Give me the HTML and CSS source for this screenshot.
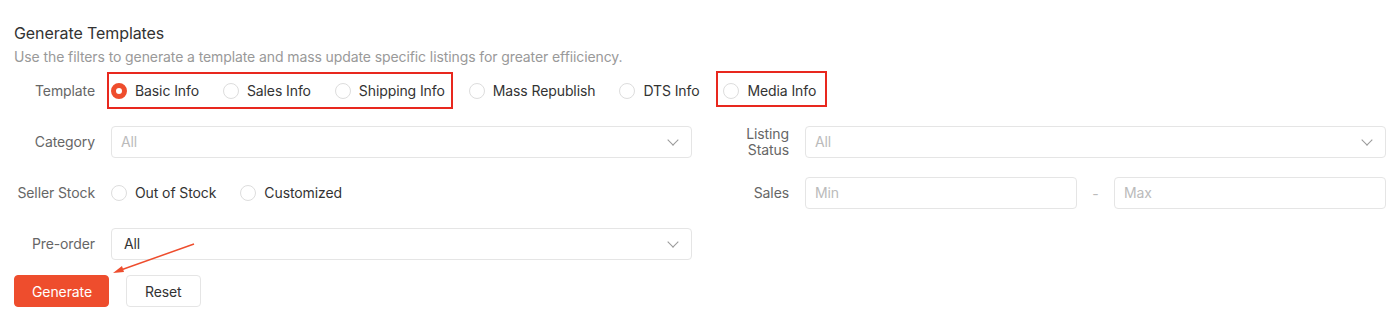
FILE: index.html
```html
<!DOCTYPE html>
<html lang="en">
<head>
    <meta charset="UTF-8">
    <meta name="viewport" content="width=device-width, initial-scale=1.0">
    <title>Generate Templates</title>
    <link rel="stylesheet" href="styles.css">
</head>
<body>
    <div class="page">
        <div class="title">Generate Templates</div>
        <div class="subtitle">Use the filters to generate a template and mass update specific listings for greater effiiciency.</div>

        <div class="form">
            <!-- Template -->
            <div class="field field-wide">
                <div class="label">Template</div>
                <div class="radios">
                    <span class="group group-main">
                        <label class="radio"><span class="dot checked"></span>Basic Info</label>
                        <label class="radio"><span class="dot"></span>Sales Info</label>
                        <label class="radio"><span class="dot"></span>Shipping Info</label>
                    </span>
                    <label class="radio"><span class="dot"></span>Mass Republish</label>
                    <label class="radio"><span class="dot"></span>DTS Info</label>
                    <span class="group group-media">
                        <label class="radio"><span class="dot"></span>Media Info</label>
                    </span>
                </div>
            </div>

            <div class="field">
                <div class="label">Category</div>
                <div class="select placeholder">All<span class="chevron"></span></div>
            </div>
            <div class="field">
                <div class="label">Listing Status</div>
                <div class="select placeholder">All<span class="chevron"></span></div>
            </div>

            <div class="field">
                <div class="label">Seller Stock</div>
                <div class="radios">
                    <label class="radio"><span class="dot"></span>Out of Stock</label>
                    <label class="radio"><span class="dot"></span>Customized</label>
                </div>
            </div>
            <div class="field">
                <div class="label">Sales</div>
                <div class="range">
                    <div class="input placeholder">Min</div>
                    <span class="dash">-</span>
                    <div class="input placeholder">Max</div>
                </div>
            </div>

            <div class="field">
                <div class="label">Pre-order</div>
                <div class="select">All<span class="chevron"></span></div>
            </div>
        </div>

        <div class="actions">
            <button class="btn btn-primary">Generate</button>
            <button class="btn">Reset</button>
        </div>

        <!-- annotation arrow -->
        <svg class="arrow" width="110" height="45" viewBox="0 0 110 45">
            <line x1="94" y1="9" x2="18" y2="36" stroke="#ee4d2d" stroke-width="1.5"/>
            <polygon points="13,38 22,31 24,37" fill="#ee4d2d"/>
        </svg>
    </div>
</body>
</html>
```

FILE: styles.css
```css
body {
    margin: 0;
    background: #fff;
    font-family: "Inter", "Liberation Sans", sans-serif;
    font-size: 14px;
    letter-spacing: -0.1px;
    color: #333;
}
.page {
    position: relative;
    padding: 22px 14px 0;
}
.title {
    font-size: 16px;
    line-height: 22px;
    color: #333;
}
.subtitle {
    margin-top: 3px;
    line-height: 20px;
    color: #999;
}
.form {
    display: grid;
    grid-template-columns: 1fr 1fr;
    column-gap: 16px;
    row-gap: 19px;
    margin-top: 8px;
}
.field {
    display: flex;
    align-items: center;
    min-height: 32px;
}
.field-wide {
    grid-column: 1 / 3;
}
.label {
    width: 81px;
    flex-shrink: 0;
    margin-right: 16px;
    text-align: right;
    line-height: 16px;
    color: #666;
}
.radios {
    display: flex;
    align-items: center;
}
.group {
    position: relative;
    display: flex;
    align-items: center;
}
/* red annotation boxes */
.group::after {
    content: "";
    position: absolute;
    border: 2px solid #e8281e;
}
.group-main::after {
    left: -4px;
    right: 16px;
    top: -9px;
    bottom: -8px;
}
.group-media::after {
    left: -7px;
    right: 13px;
    top: -10px;
    bottom: -6px;
}
.radio {
    display: flex;
    align-items: center;
    margin-right: 24px;
    line-height: 20px;
    color: #333;
}
.dot {
    box-sizing: border-box;
    width: 16px;
    height: 16px;
    margin-right: 8px;
    border: 1px solid #ddd;
    border-radius: 50%;
    background: #fff;
}
.dot.checked {
    border: 5px solid #ee4d2d;
    background: #fff;
}
.select,
.input {
    box-sizing: border-box;
    position: relative;
    flex: 1;
    height: 32px;
    line-height: 30px;
    padding: 0 12px;
    border: 1px solid #e5e5e5;
    border-radius: 4px;
    color: #333;
}
.placeholder {
    padding-left: 9px;
    color: #bbb;
}
.chevron {
    position: absolute;
    right: 14px;
    top: 9px;
    width: 7px;
    height: 7px;
    border-right: 1px solid #999;
    border-bottom: 1px solid #999;
    transform: rotate(45deg);
}
.range {
    display: flex;
    align-items: center;
    flex: 1;
}
.dash {
    width: 37px;
    text-align: center;
    color: #bbb;
}
.actions {
    display: flex;
    gap: 17px;
    margin-top: 15px;
}
.btn {
    height: 32px;
    padding: 0 18px;
    border: 1px solid #e5e5e5;
    border-radius: 4px;
    background: #fff;
    font-family: inherit;
    font-size: 14px;
    letter-spacing: -0.1px;
    color: #333;
}
.btn-primary {
    padding: 0 16px 0 17px;
    border-color: #ee4d2d;
    background: #ee4d2d;
    color: #fff;
}
.arrow {
    position: absolute;
    left: 100px;
    top: 235px;
}
```
